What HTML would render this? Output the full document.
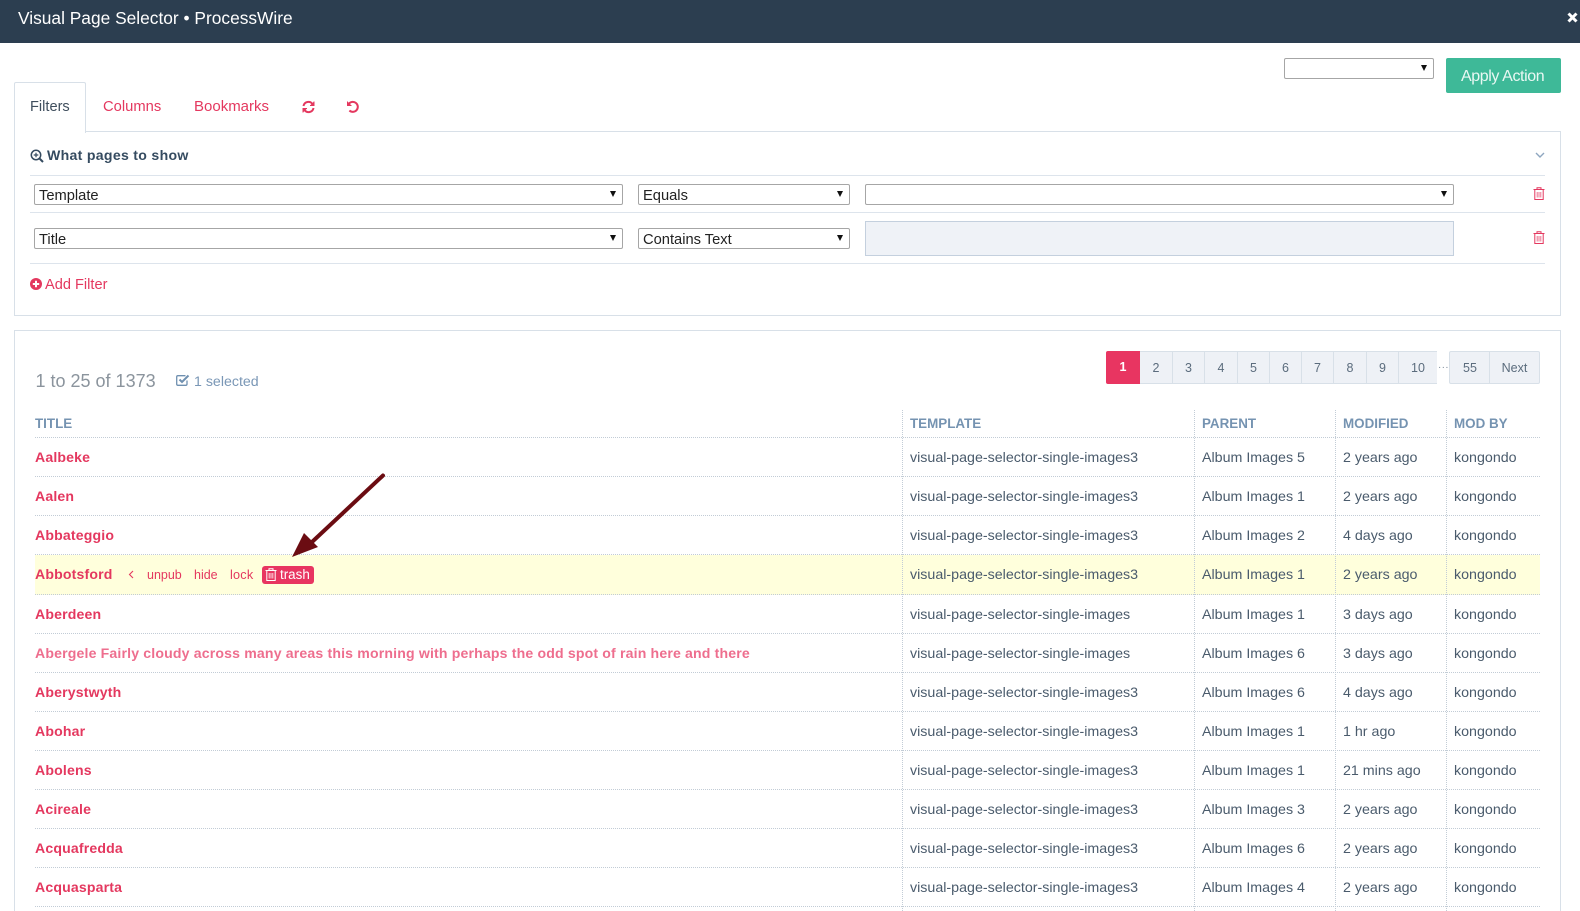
<!DOCTYPE html>
<html lang="en"><head><meta charset="utf-8"><title>Visual Page Selector • ProcessWire</title>
<style>
html,body{margin:0;padding:0;background:#fff;width:1580px;height:911px;overflow:hidden}
body{position:relative;font-family:"Liberation Sans",Arial,sans-serif;font-size:14px;color:#4a5b6c}
.a{position:absolute}
.t{position:absolute;white-space:nowrap;line-height:20px}
.sel{position:absolute;box-sizing:border-box;height:21px;border:1px solid #a6a6a6;border-radius:2px;background:#fff;color:#222;font-size:14.7px;line-height:22px;padding-left:4px}
.sel:after{content:"";position:absolute;right:6px;top:6px;border-left:3px solid transparent;border-right:3px solid transparent;border-top:6px solid #111}
.hl{position:absolute;left:30px;width:1515px;height:1px;background:#dde4ec}
.pink{color:#e4385f}
.pg{position:absolute;top:351px;height:33px;box-sizing:border-box;background:#eef1f6;border:1px solid #d8e0e8;border-left:0;text-align:center;font-size:12.5px;line-height:32px;color:#5b6c7d}
.r{position:absolute;left:35px;width:1505px;height:38px;border-bottom:1px dotted #c2ccd6}
.r span{position:absolute;top:10px;line-height:20px;white-space:nowrap;font-size:14.25px}
.r .c1{left:0;top:9px;font-weight:bold;font-size:14.1px;color:#e4385f;letter-spacing:.16px}
.r .c2{left:875px}.r .c3{left:1167px}.r .c4{left:1308px}.r .c5{left:1419px}
.h{position:absolute;top:414px;font-weight:bold;font-size:13.4px;line-height:20px;color:#7593b1;white-space:nowrap}
.v{position:absolute;top:410px;height:501px;width:0;border-left:1px dotted #c2ccd6;z-index:3}
</style></head><body>

<div class="a" style="left:0;top:0;width:1580px;height:43px;background:#2c3e50"></div>
<div class="t" style="left:18px;top:8px;color:#fff;font-size:17.35px">Visual Page Selector • ProcessWire</div>
<svg class="a" style="left:1567px;top:12px" width="11" height="11" viewBox="0 0 11 11"><path d="M1.5 1.5L9.5 9.5M9.5 1.5L1.5 9.5" stroke="#fff" stroke-width="3"/></svg>

<div class="sel" style="left:1284px;top:58px;width:150px"></div>
<div class="a" style="left:1446px;top:58px;width:115px;height:35px;background:#3eb998;border-radius:2px"></div>
<div class="t" style="left:1461px;top:66px;color:#e9f8f3;font-size:16px;letter-spacing:-.4px;line-height:22px">Apply Action</div>

<!-- panel 1 -->
<div class="a" style="left:14px;top:131px;width:1545px;height:183px;border:1px solid #d8e0e8"></div>
<div class="a" style="left:14px;top:82px;width:70px;height:50px;border:1px solid #d8e0e8;border-bottom:0;border-radius:2px 2px 0 0;background:#fff"></div>
<div class="t" style="left:30px;top:97px;font-size:14.6px;color:#3f4e5d">Filters</div>
<div class="t pink" style="left:103px;top:97px;font-size:14.75px">Columns</div>
<div class="t pink" style="left:194px;top:97px;font-size:15px">Bookmarks</div>
<svg class="a" style="left:302px;top:100px" width="13" height="14" viewBox="0 0 13 14" fill="none" stroke="#e4385f" stroke-width="2"><path d="M1.5 6A5 5 0 0 1 10.5 4"/><path d="M11.5 8A5 5 0 0 1 2.5 10"/><path d="M12 1.5V5.5H8" fill="#e4385f" stroke-width="1"/><path d="M1 12.5V8.5H5" fill="#e4385f" stroke-width="1"/></svg>
<svg class="a" style="left:346px;top:100px" width="14" height="14" viewBox="0 0 14 14" fill="none" stroke="#e4385f" stroke-width="2"><path d="M3 3.6A5 5 0 1 1 3.4 10.5"/><path d="M1 1V6H6Z" fill="#e4385f" stroke="none"/></svg>

<svg class="a" style="left:30px;top:149px" width="14" height="14" viewBox="0 0 14 14" fill="none" stroke="#354b60" stroke-width="1.5"><circle cx="6" cy="6" r="4.7"/><path d="M9.5 9.5L13 13" stroke-width="2"/><path d="M3.7 6H8.3M6 3.7V8.3" stroke-width="1.2"/></svg>
<div class="t" style="left:47px;top:145px;font-weight:bold;font-size:14.1px;color:#354b60;letter-spacing:.3px">What pages to show</div>
<svg class="a" style="left:1535px;top:152px" width="10" height="7" viewBox="0 0 10 7" fill="none" stroke="#8ea6c0" stroke-width="1.4"><path d="M1 1L5 5L9 1"/></svg>

<div class="hl" style="top:175px"></div>
<div class="hl" style="top:212px"></div>
<div class="hl" style="top:263px"></div>

<div class="sel" style="left:34px;top:184px;width:589px">Template</div>
<div class="sel" style="left:638px;top:184px;width:212px">Equals</div>
<div class="sel" style="left:865px;top:184px;width:589px"></div>
<div class="sel" style="left:34px;top:228px;width:589px">Title</div>
<div class="sel" style="left:638px;top:228px;width:212px">Contains Text</div>
<div class="a" style="left:865px;top:221px;width:587px;height:33px;background:#eff2f7;border:1px solid #c4d0de"></div>

<svg class="a" style="left:1533px;top:187px" width="12" height="13" viewBox="0 0 12 13" fill="none" stroke="#e4385f"><path d="M.5 2.5H11.5M4 2.5V.8H8V2.5M1.8 2.5V12.5H10.2V2.5"/><path d="M4.2 5V10.5M6 5V10.5M7.8 5V10.5" opacity=".7"/></svg>
<svg class="a" style="left:1533px;top:231px" width="12" height="13" viewBox="0 0 12 13" fill="none" stroke="#e4385f"><path d="M.5 2.5H11.5M4 2.5V.8H8V2.5M1.8 2.5V12.5H10.2V2.5"/><path d="M4.2 5V10.5M6 5V10.5M7.8 5V10.5" opacity=".7"/></svg>

<svg class="a" style="left:30px;top:278px" width="12" height="12" viewBox="0 0 12 12"><circle cx="6" cy="6" r="6" fill="#e4385f"/><path d="M2.8 6H9.2M6 2.8V9.2" stroke="#fff" stroke-width="2"/></svg>
<div class="t pink" style="left:45px;top:274px;font-size:14.6px;line-height:22px">Add Filter</div>

<!-- panel 2 -->
<div class="a" style="left:14px;top:330px;width:1545px;height:600px;border:1px solid #d8e0e8"></div>
<div class="t" style="left:35.5px;top:371px;font-size:18px;color:#8b949d">1 to 25 of 1373</div>
<svg class="a" style="left:176px;top:374px" width="14" height="12" viewBox="0 0 14 12" fill="none" stroke="#6f90b0" stroke-width="1.3"><path d="M11 6.5V10.2A1.2 1.2 0 0 1 9.8 11.3H1.9A1.2 1.2 0 0 1 .7 10.2V2.8A1.2 1.2 0 0 1 1.9 1.7H9.5"/><path d="M3.5 5.5L6 8L12.5 1.5" stroke-width="2"/></svg>
<div class="t" style="left:194px;top:372px;font-size:14.2px;color:#7a97b6;line-height:21px">1 selected</div>

<div class="pg" style="left:1106px;width:34px;background:#e83561;border:0;border-radius:2px 0 0 2px;color:#fff;font-weight:bold;line-height:33px">1</div>
<div class="pg" style="left:1140px;width:33px">2</div>
<div class="pg" style="left:1173px;width:32px">3</div>
<div class="pg" style="left:1205px;width:33px">4</div>
<div class="pg" style="left:1238px;width:32px">5</div>
<div class="pg" style="left:1270px;width:32px">6</div>
<div class="pg" style="left:1302px;width:32px">7</div>
<div class="pg" style="left:1334px;width:33px">8</div>
<div class="pg" style="left:1367px;width:32px">9</div>
<div class="pg" style="left:1399px;width:38px;border-right:0">10</div>
<div class="t" style="left:1438px;top:363px;font-size:10px;line-height:10px;color:#7b8a99;letter-spacing:.3px">···</div>
<div class="pg" style="left:1449px;width:41px;border-left:1px solid #d8e0e8;border-radius:2px 0 0 2px;padding-left:1px">55</div>
<div class="pg" style="left:1490px;width:50px;border-radius:0 2px 2px 0">Next</div>

<!-- table -->
<div class="h" style="left:35px">TITLE</div>
<div class="h" style="left:910px">TEMPLATE</div>
<div class="h" style="left:1202px">PARENT</div>
<div class="h" style="left:1343px">MODIFIED</div>
<div class="h" style="left:1454px">MOD BY</div>
<div class="v" style="left:902px"></div>
<div class="v" style="left:1194px"></div>
<div class="v" style="left:1335px"></div>
<div class="v" style="left:1446px"></div>
<div class="a" style="left:35px;top:437px;width:1505px;height:0;border-top:1px dotted #c2ccd6"></div>

<div class="r" style="top:438px"><span class="c1">Aalbeke</span><span class="c2">visual-page-selector-single-images3</span><span class="c3">Album Images 5</span><span class="c4">2 years ago</span><span class="c5">kongondo</span></div>
<div class="r" style="top:477px"><span class="c1">Aalen</span><span class="c2">visual-page-selector-single-images3</span><span class="c3">Album Images 1</span><span class="c4">2 years ago</span><span class="c5">kongondo</span></div>
<div class="r" style="top:516px"><span class="c1">Abbateggio</span><span class="c2">visual-page-selector-single-images3</span><span class="c3">Album Images 2</span><span class="c4">4 days ago</span><span class="c5">kongondo</span></div>
<div class="r" style="top:555px;height:39px;background:#ffffdc"><span class="c1">Abbotsford</span>
<span class="pink" style="left:112px;font-size:12.5px">unpub</span><span class="pink" style="left:159px;font-size:12.5px">hide</span><span class="pink" style="left:195px;font-size:12.7px;letter-spacing:.2px">lock</span>
<span class="c2">visual-page-selector-single-images3</span><span class="c3">Album Images 1</span><span class="c4">2 years ago</span><span class="c5">kongondo</span></div>
<svg class="a" style="left:128px;top:570px" width="6" height="9" viewBox="0 0 6 9" fill="none" stroke="#e4385f" stroke-width="1.1"><path d="M5 1L1.5 4.5L5 8"/></svg>
<div class="a" style="left:262px;top:566px;width:52px;height:18px;background:#e83561;border-radius:3px"></div>
<svg class="a" style="left:265px;top:568px" width="12" height="13" viewBox="0 0 12 13" fill="none" stroke="#fff"><path d="M.5 2.5H11.5M4 2.5V.8H8V2.5M1.8 2.5V12.5H10.2V2.5"/><path d="M4.2 5V10.5M6 5V10.5M7.8 5V10.5" opacity=".8"/></svg>
<div class="t" style="left:280px;top:565px;color:#fff;font-size:13.4px">trash</div>

<div class="r" style="top:595px"><span class="c1">Aberdeen</span><span class="c2">visual-page-selector-single-images</span><span class="c3">Album Images 1</span><span class="c4">3 days ago</span><span class="c5">kongondo</span></div>
<div class="r" style="top:634px"><span class="c1" style="color:#ee6e8e">Abergele Fairly cloudy across many areas this morning with perhaps the odd spot of rain here and there</span><span class="c2">visual-page-selector-single-images</span><span class="c3">Album Images 6</span><span class="c4">3 days ago</span><span class="c5">kongondo</span></div>
<div class="r" style="top:673px"><span class="c1">Aberystwyth</span><span class="c2">visual-page-selector-single-images3</span><span class="c3">Album Images 6</span><span class="c4">4 days ago</span><span class="c5">kongondo</span></div>
<div class="r" style="top:712px"><span class="c1">Abohar</span><span class="c2">visual-page-selector-single-images3</span><span class="c3">Album Images 1</span><span class="c4">1 hr ago</span><span class="c5">kongondo</span></div>
<div class="r" style="top:751px"><span class="c1">Abolens</span><span class="c2">visual-page-selector-single-images3</span><span class="c3">Album Images 1</span><span class="c4">21 mins ago</span><span class="c5">kongondo</span></div>
<div class="r" style="top:790px"><span class="c1">Acireale</span><span class="c2">visual-page-selector-single-images3</span><span class="c3">Album Images 3</span><span class="c4">2 years ago</span><span class="c5">kongondo</span></div>
<div class="r" style="top:829px"><span class="c1">Acquafredda</span><span class="c2">visual-page-selector-single-images3</span><span class="c3">Album Images 6</span><span class="c4">2 years ago</span><span class="c5">kongondo</span></div>
<div class="r" style="top:868px"><span class="c1">Acquasparta</span><span class="c2">visual-page-selector-single-images3</span><span class="c3">Album Images 4</span><span class="c4">2 years ago</span><span class="c5">kongondo</span></div>

<!-- arrow -->
<svg class="a" style="left:285px;top:465px;z-index:5" width="105" height="97" viewBox="285 465 105 97"><path d="M312 542L383 475.5" stroke="#6b0c12" stroke-width="4" stroke-linecap="round" fill="none"/><path d="M292 557L304 533L318 547Z" fill="#6b0c12"/></svg>

</body></html>
